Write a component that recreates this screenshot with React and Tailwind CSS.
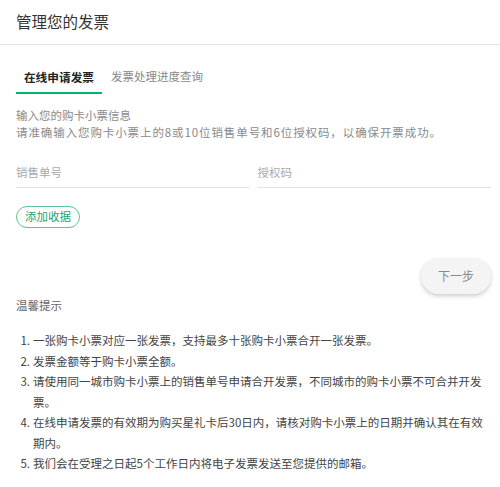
import React, { useState } from 'react';

const TIPS = [
  '一张购卡小票对应一张发票，支持最多十张购卡小票合开一张发票。',
  '发票金额等于购卡小票全额。',
  '请使用同一城市购卡小票上的销售单号申请合开发票，不同城市的购卡小票不可合并开发票。',
  <>在线申请发票的有效期为购买星礼卡后30日内，请核对购卡小票上的日期并确认其在有效<br />期内。</>,
  '我们会在受理之日起5个工作日内将电子发票发送至您提供的邮箱。',
];

export default function App() {
  const [tab, setTab] = useState('apply');

  return (
    <div className="min-h-screen bg-white font-['Noto_Sans_CJK_SC','Noto_Sans',sans-serif] text-[11.5px]">
      <div className="h-[45px] flex items-center px-4 border-b border-[#e6e6e6]">
        <h1 className="text-[15.5px] text-[#333]">管理您的发票</h1>
      </div>

      <div className="pl-4 pr-[9px]">
        {/* Tabs */}
        <div className="flex mt-[17px]">
          <button
            className={`w-[86px] h-[32px] text-[11.7px] border-b-2 ${tab === 'apply' ? 'font-bold text-[#222] border-[#00b26a]' : 'text-[#888] border-transparent'}`}
            onClick={() => setTab('apply')}
          >
            在线申请发票
          </button>
          <button
            className={`ml-[9px] h-[32px] text-[11.5px] border-b-2 ${tab === 'query' ? 'font-bold text-[#222] border-[#00b26a]' : 'text-[#888] border-transparent'}`}
            onClick={() => setTab('query')}
          >
            发票处理进度查询
          </button>
        </div>

        <div className="mt-[13px] leading-[17px] text-[#8a8a8a]">
          <p>输入您的购卡小票信息</p>
          <p className="tracking-[0.9px]">请准确输入您购卡小票上的8或10位销售单号和6位授权码，以确保开票成功。</p>
        </div>

        {/* Inputs */}
        <div className="flex gap-2 mt-[15px]">
          <input
            placeholder="销售单号"
            className="flex-1 min-w-0 h-[32px] border-b border-[#e2e2e2] outline-none text-[11.5px] text-[#333] placeholder:text-[#aaa]"
          />
          <input
            placeholder="授权码"
            className="flex-1 min-w-0 h-[32px] border-b border-[#e2e2e2] outline-none text-[11.5px] text-[#333] placeholder:text-[#aaa]"
          />
        </div>

        <button className="mt-[18px] w-[64px] h-[22px] rounded-full border border-[#5cc596] text-[#2b9e6b] text-[11.5px] leading-none">
          添加收据
        </button>

        <div className="flex justify-end mt-[30px]">
          <button className="w-[70px] h-[36px] rounded-full bg-[#f4f4f4] text-[#888] text-[12px] shadow-[0_2px_4px_rgba(0,0,0,0.2)]">
            下一步
          </button>
        </div>

        <p className="mt-[2px] leading-[18px] text-[#666]">温馨提示</p>

        {/* Tips */}
        <ol className="mt-[16px] text-[#444] leading-[20.5px]">
          {TIPS.map((t, i) => (
            <li key={i} className="flex">
              <span className="w-[17px] shrink-0 text-right pr-[3px]">{i + 1}.</span>
              <span className="w-[451px]">{t}</span>
            </li>
          ))}
        </ol>
      </div>
    </div>
  );
}
